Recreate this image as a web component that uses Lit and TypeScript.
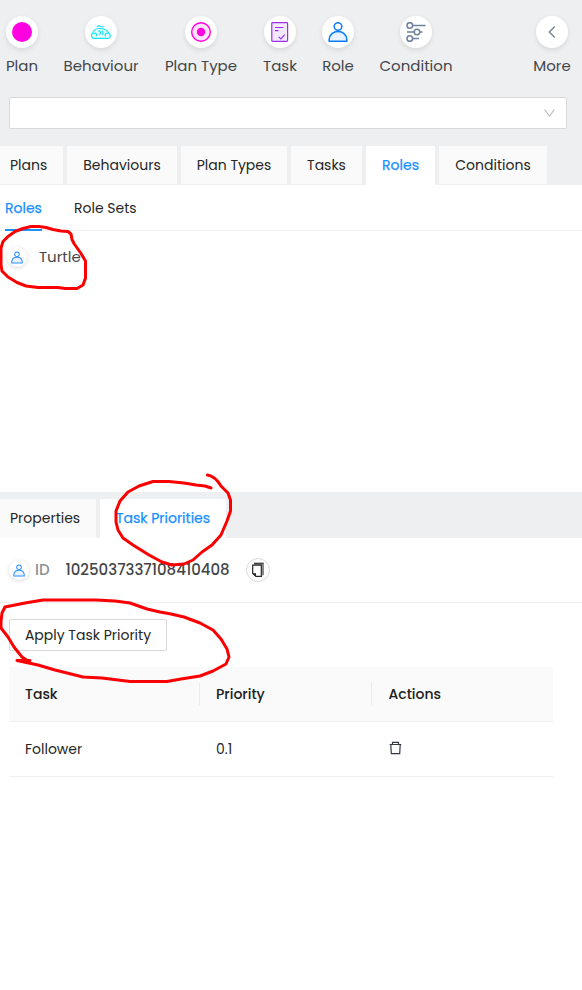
import { LitElement, html, css, svg } from "lit";
import { customElement } from "lit/decorators.js";
import { styleMap } from "lit/directives/style-map.js";

const roleIcon = svg`<circle cx="10" cy="4.500" r="3.800"/><path fill="#e8f3ff" d="M1.200 19.200v-1.800C1.500 12.600 5.200 9.400 10 9.400s8.500 3.200 8.800 8v1.800z"/>`;

const icons: Record<string, unknown> = {
  plan: html`<svg width="20" height="20" viewBox="0 0 20 20"><circle cx="10" cy="10" r="10" fill="#ff00e1"/></svg>`,
  behaviour: html`<svg width="20" height="20" viewBox="0 0 20 20" fill="none" stroke="#12e4fa" stroke-width="1.200" stroke-linecap="round">
    <path fill="#e9fcff" d="M2.500 16.300C.2 15.900-.1 12.600 1.600 11.200 2.400 8.400 5 6.600 8 6.500c4.200-.2 7.600 1.200 9.300 3.900 1.800 1.300 2.600 3.700 1.500 5.100-.5.700-1.200.8-2 .8z"/>
    <path d="M6.200 4.600c1.200-1.100 2.500-.7 3.500-.1 1 .5 1.800.5 2.600.3M3 11.600c1.800-1 3.300.3 2.400 2M7.700 9c1.900-.3 2.500 1.900 1 3.700M11.500 9c-.2 1.500 1.400 1.700.2 3.800M17.500 11.300c-2-.9-4 .6-3.200 2.600"/></svg>`,
  planType: html`<svg width="20" height="20" viewBox="0 0 20 20"><circle cx="10" cy="10" r="9.300" fill="#ffe3fb" stroke="#ff00e1" stroke-width="1.400"/><circle cx="10" cy="10" r="4.200" fill="#ff00e1"/></svg>`,
  task: html`<svg width="20" height="20" viewBox="0 0 20 20" fill="none" stroke="#9c2fee" stroke-width="1.200"><rect x="1.800" y=".7" width="15.800" height="18.600" rx=".8" fill="#f4e8ff"/><path d="M5 5.500h8.500M5 8.600h3.500M8.800 14.900l2 2 4-4.300"/></svg>`,
  role: html`<svg width="20" height="20" viewBox="0 0 20 20" fill="none" stroke="#0d7dff" stroke-width="1.500">${roleIcon}</svg>`,
  condition: html`<svg width="20" height="20" viewBox="0 0 20 20" fill="none" stroke="#6c829b" stroke-width="1.500"><circle cx="3.800" cy="3.500" r="2.800"/><circle cx="11" cy="10" r="2.800"/><circle cx="3.800" cy="16.500" r="2.800"/><path d="M7 3.500h12.600M1 10h7M14 10h2.500M7 16.500h6"/></svg>`,
  more: html`<svg width="20" height="20" viewBox="0 0 20 20" fill="none" stroke="#7d8895" stroke-width="1.500"><path d="M12.800 4.500L7.300 10l5.500 5.500"/></svg>`,
};

// label, icon, box width
const tools: [string, string, number][] = [
  ["Plan", "plan", 32],
  ["Behaviour", "behaviour", 74],
  ["Plan Type", "planType", 74],
  ["Task", "task", 32],
  ["Role", "role", 32],
  ["Condition", "condition", 72],
];

// label, tab width
const tabs: [string, number][] = [
  ["Plans", 63],
  ["Behaviours", 110],
  ["Plan Types", 106],
  ["Tasks", 71],
  ["Roles", 69],
  ["Conditions", 108],
];

@customElement("app-root")
export class AppRoot extends LitElement {
  static styles = css`
    :host { display: block; position: relative; height: 990px; overflow: hidden; background: #fff;
      font: 400 14px/22px Poppins, Inter, "Open Sans", sans-serif; color: #262626; }
    * { box-sizing: border-box; }
    svg { display: block; flex: none; }
    .top { height: 185px; background: #eeeff1; display: flex; flex-direction: column; }
    .tools { height: 97px; padding: 16px 11px 0 6px; display: flex; gap: 26px; font-size: 15px; color: #434649; }
    .tool { display: flex; flex-direction: column; align-items: center; white-space: nowrap; }
    .tool.more { margin-left: auto; width: 38px; }
    .disc { width: 32px; height: 32px; border-radius: 50%; background: #fff; display: grid; place-items: center;
      box-shadow: 0 2px 5px rgba(0,0,0,.1); margin-bottom: 7px; flex: none; }
    .select { height: 32px; margin: 0 15px 17px 9px; padding-right: 11px; background: #fff; border: 1px solid #d9d9d9;
      border-radius: 2px; display: flex; justify-content: flex-end; align-items: center; }
    .tabs { display: flex; gap: 4px; border-bottom: 1px solid #f0f0f0; height: 39px; }
    .tab { height: 38px; background: #fafafa; display: flex; align-items: center; justify-content: center; white-space: nowrap; }
    .tab.first { justify-content: flex-start; padding-left: 10px; }
    .tab.on { height: 39px; background: #fff; color: #1890ff; -webkit-text-stroke: .25px #1890ff; padding-bottom: 1px; }
    .subtabs { height: 46px; padding-left: 5px; display: flex; gap: 32px; border-bottom: 1px solid #f0f0f0; }
    .sub { height: 46px; padding-top: 12px; }
    .sub.on { width: 37px; color: #1890ff; border-bottom: 2px solid #1890ff; -webkit-text-stroke: .25px #1890ff; }
    .list { height: 261px; padding: 15px 7px; }
    .item { display: flex; align-items: center; gap: 12px; color: #434649; font-size: 15px; }
    .mini { width: 20px; height: 20px; border-radius: 50%; background: #fff; display: grid; place-items: center;
      box-shadow: 0 1px 4px rgba(0,0,0,.15); flex: none; }
    .lower { height: 46px; background: #eeeff1; padding-top: 7px; display: flex; gap: 4px; }
    .lower .tab { height: 39px; width: 96px; padding-bottom: 1px; }
    .lower .tab.on { width: 126px; }
    .idrow { height: 65px; padding-left: 9px; border-bottom: 1px solid #f0f0f0; display: flex; align-items: center; font-size: 15px; }
    .key { width: 30.5px; margin-left: 6px; color: #8c8f93; font-weight: 500; }
    .num { width: 180.5px; font-weight: 500; color: #434649; }
    .copy { width: 24px; height: 24px; border: 1px solid #d9d9d9; border-radius: 50%; display: grid; place-items: center; }
    .apply { display: block; width: 158px; height: 32px; margin: 16px 0 16px 9px; padding: 0; border: 1px solid #d9d9d9;
      border-radius: 2px; background: #fff; font: inherit; color: inherit; }
    .table { margin-left: 9px; width: 544px; }
    .row { display: grid; grid-template-columns: 191px 172px 181px; height: 55px; align-items: center; border-bottom: 1px solid #f0f0f0; }
    .head { background: #fafafa; font-weight: 500; color: #202020; }
    .cell { padding-left: 16px; height: 22px; }
    .cell:last-child { padding-left: 16.5px; }
    .head .line { border-right: 1px solid #ebebeb; }
    .trash { padding-top: 3px; }
    .marks { position: absolute; left: 0; top: 0; pointer-events: none; }
  `;

  private person() {
    return html`<span class="mini"><svg width="12" height="13" viewBox="0 0 20 20" fill="none" stroke="#2b8fff" stroke-width="1.700">${roleIcon}</svg></span>`;
  }

  render() {
    return html`
      <div class="top">
        <div class="tools">
          ${tools.map(([label, icon, width]) => html`<div class="tool" style=${styleMap({ width: `${width}px` })}>
            <span class="disc">${icons[icon]}</span><span>${label}</span></div>`)}
          <div class="tool more"><span class="disc">${icons.more}</span><span>More</span></div>
        </div>
        <div class="select"><svg width="11" height="8" viewBox="0 0 11 8" fill="none" stroke="#bfbfbf" stroke-width="1.200"><path d="M.7.7l4.800 6.300L10.300.7"/></svg></div>
        <div class="tabs">
          ${tabs.map(([label, width], i) => html`<div class="tab ${i === 0 ? "first" : ""} ${label === "Roles" ? "on" : ""}" style=${styleMap({ width: `${width}px` })}>${label}</div>`)}
        </div>
      </div>
      <div class="subtabs"><div class="sub on">Roles</div><div class="sub">Role Sets</div></div>
      <div class="list"><div class="item">${this.person()}<span>Turtle</span></div></div>
      <div class="lower"><div class="tab first">Properties</div><div class="tab on">Task Priorities</div></div>
      <div class="idrow">${this.person()}<span class="key">ID</span><span class="num">1025037337108410408</span>
        <span class="copy"><svg width="14" height="16" viewBox="0 0 14 16" fill="none"><path d="M3 .8h10v12.400h-2.300V3H3z" fill="#8a8a8a"/><path d="M3 1.300h9.500" stroke="#333"/><path d="M1.700 3.200h8.600v11.200H5l-3.300-2.900z" stroke="#262626" stroke-width="1.200"/><path d="M1.500 11.200H5v3.500z" fill="#262626"/></svg></span>
      </div>
      <button class="apply">Apply Task Priority</button>
      <div class="table">
        <div class="row head"><div class="cell line">Task</div><div class="cell line">Priority</div><div class="cell">Actions</div></div>
        <div class="row"><div class="cell">Follower</div><div class="cell">0.1</div><div class="cell trash">
          <svg width="14" height="14" viewBox="0 0 14 14" fill="none" stroke="#343840" stroke-width="1.200"><path d="M.7 3.500h11.600M3.500 3.300V1.400h6v1.900M1.800 3.700l.5 9h8.400l.5-9"/></svg></div></div>
      </div>
      <svg class="marks" width="582" height="990" viewBox="0 0 582 990" fill="none" stroke="#fb0000" stroke-width="3" stroke-linecap="round" stroke-linejoin="round">
        <path d="M81 253.500L74 243.500 72 239.500 71 234 68 231.500 61 231 53 229.500 46 227.500 39 226.500 31 226.500 23 228.500 15 231.500 8 236.500 3 241.500 1 248 1 265 2 271 8 277 17 282.500 26 286 38 287.500 58 287.500 65 288.500 77 288.500 83 285 85.500 278 85.500 261 81 253.500"/>
        <path d="M207.500 475C214 476 218 481 221 486L228 493 230.500 500 230.500 511 227 521 221 535 212 545 202 552 193 560 184 564 172 565 162 562 149 555 133 545 123 538 118 530 116 522 116 511 120 501 128 492 139 486 153 481.500 169 481.500 184 483 196 485 205 486 211 488"/>
        <path d="M17 660.500L30 660.500M17 660.500L38 665 55 670 83 677 102 678 130 681.500 167 681.500 181 679 200 676 213 671 226 664 229 657 227 649 221 639 213 630 200 623 184 617 171 614 160 612 147 609 130 603 115 601 96 600 43 600 25 603 5 607 2 613 1 621 1 628 8 637 14 647 22 657 28 661"/>
      </svg>`;
  }
}
